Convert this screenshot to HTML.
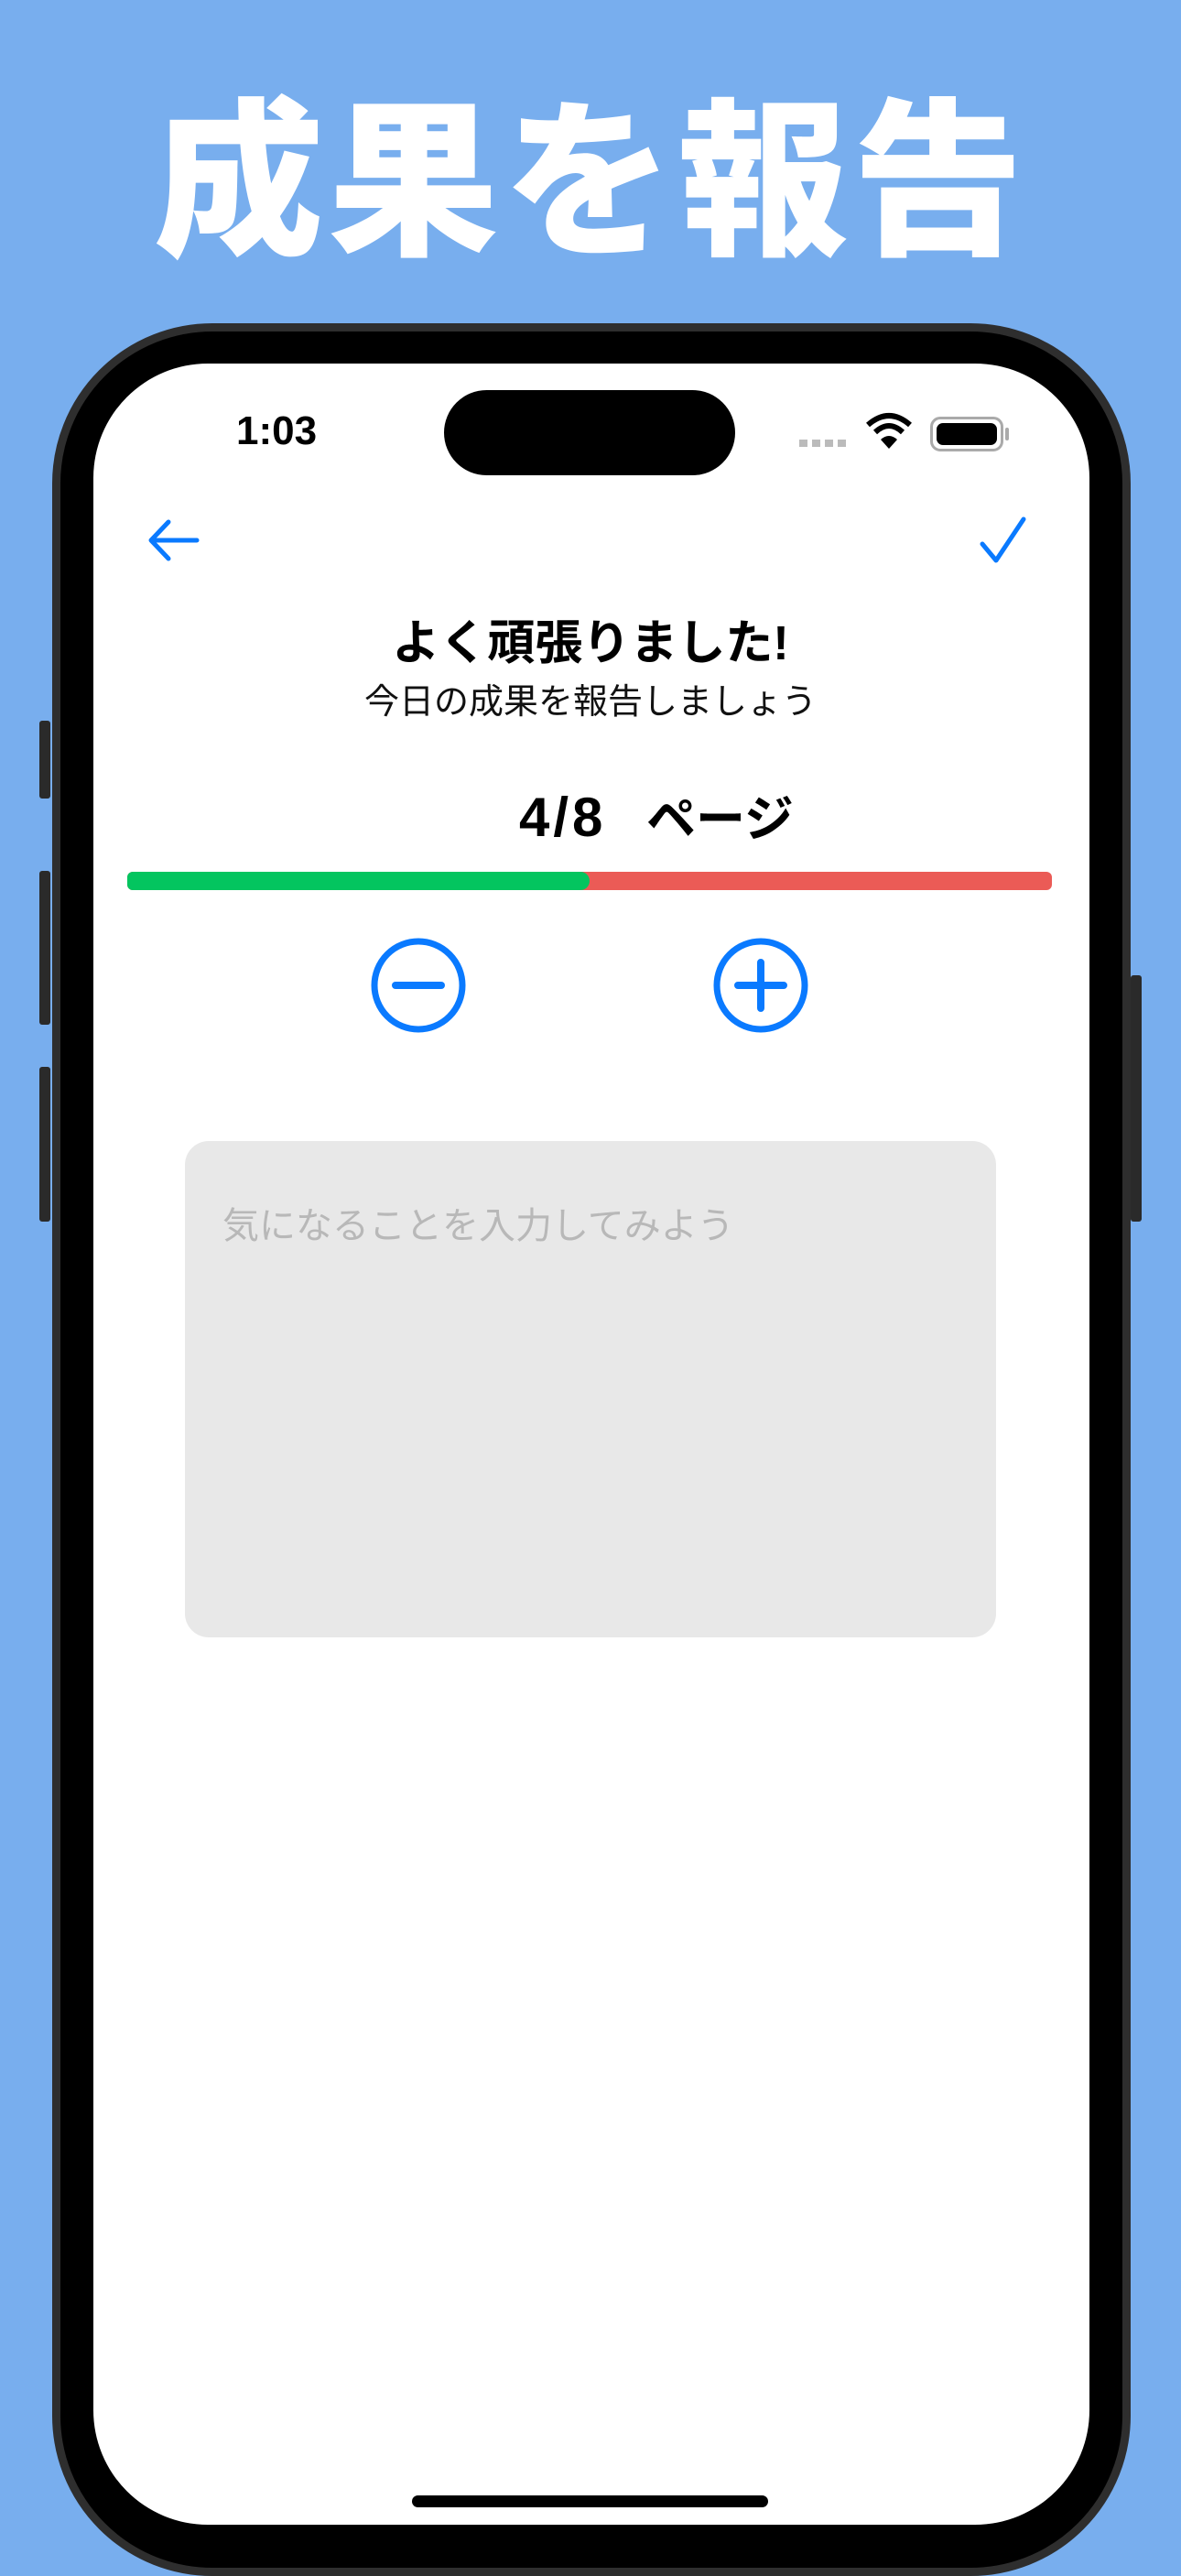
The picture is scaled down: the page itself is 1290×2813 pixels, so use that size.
<!DOCTYPE html>
<html><head><meta charset="utf-8"><style>
*{margin:0;padding:0;box-sizing:border-box}
body{width:1290px;height:2796px;background:#78aeee;position:relative;overflow:hidden;font-family:"Liberation Sans","Noto Sans CJK JP",sans-serif}
.abs{position:absolute}
h1{position:absolute;left:0;width:1290px;text-align:center;top:86px;font-size:186px;line-height:194px;color:#fff;font-weight:900;letter-spacing:5px;font-family:"Noto Sans CJK JP",sans-serif}
.frame{left:57px;top:353px;width:1178px;height:2460px;background:#000;border:9px solid #2e2e2e;border-radius:175px}
.screen{left:102px;top:397px;width:1088px;height:2360px;background:#fff;border-radius:125px;overflow:hidden}
.btn{background:#2a2a2a;border-radius:3px}
</style></head><body>
<h1>成果を報告</h1>
<div class="abs btn" style="left:43px;top:787px;width:12px;height:85px"></div>
<div class="abs btn" style="left:43px;top:951px;width:12px;height:168px"></div>
<div class="abs btn" style="left:43px;top:1165px;width:12px;height:169px"></div>
<div class="abs btn" style="left:1235px;top:1065px;width:12px;height:269px"></div>
<div class="abs frame"></div>
<div class="abs screen"></div>
<div class="abs" style="left:485px;top:426px;width:318px;height:93px;background:#000;border-radius:47px"></div>
<div class="abs" style="left:258px;top:446px;font-size:44px;font-weight:bold;color:#000">1:03</div>
<div class="abs" style="left:873px;top:480px;width:56px;height:8px;background:repeating-linear-gradient(90deg,#bbb 0 9px,transparent 9px 14px)"></div>
<svg class="abs" style="left:944px;top:450px" width="54" height="42" viewBox="0 0 54 42"><path d="M4 14 Q27 -6 50 14" stroke="#000" stroke-width="6" fill="none"/><path d="M12 22 Q27 8 42 22" stroke="#000" stroke-width="6" fill="none"/><path d="M27 40 L18 30 Q27 22 36 30 Z" fill="#000"/></svg>
<div class="abs" style="left:1016px;top:455px;width:80px;height:38px;border:3px solid #aaa;border-radius:11px;padding:4px"><div style="width:100%;height:100%;background:#000;border-radius:7px"></div></div>
<div class="abs" style="left:1098px;top:467px;width:4px;height:14px;background:#aaa;border-radius:2px"></div>
<svg class="abs" style="left:160px;top:565px" width="60" height="50" viewBox="0 0 60 50"><path d="M55 25 H6 M24 5 L5 25 L24 45" stroke="#0a7aff" stroke-width="5" fill="none" stroke-linecap="round" stroke-linejoin="round"/></svg>
<svg class="abs" style="left:1068px;top:562px" width="56" height="56" viewBox="0 0 56 56"><path d="M5 32 L20 50 L50 5" stroke="#0a7aff" stroke-width="5" fill="none" stroke-linecap="round" stroke-linejoin="round"/></svg>
<div class="abs" style="left:0;width:1290px;top:660px;text-align:center;font-size:52px;font-weight:bold;color:#000">よく頑張りました!</div>
<div class="abs" style="left:0;width:1290px;top:735px;text-align:center;font-size:38px;color:#111">今日の成果を報告しましょう</div>
<div class="abs" style="left:567px;top:850px;height:80px;display:flex;align-items:baseline;font-weight:bold;color:#000">
<span style="font-size:60px;letter-spacing:4px;width:139px;display:inline-block">4/8</span><span style="font-size:54px">ページ</span></div>
<div class="abs" style="left:139px;top:952px;width:1010px;height:20px;background:#eb5b56;border-radius:6px;overflow:hidden"><div style="width:505px;height:100%;background:#03c55f;border-radius:0 10px 10px 0"></div></div>
<svg class="abs" style="left:402px;top:1021px" width="110" height="110" viewBox="0 0 110 110"><circle cx="55" cy="55" r="48" stroke="#0a7aff" stroke-width="7" fill="none"/><path d="M30 55 H80" stroke="#0a7aff" stroke-width="8" stroke-linecap="round"/></svg>
<svg class="abs" style="left:776px;top:1021px" width="110" height="110" viewBox="0 0 110 110"><circle cx="55" cy="55" r="48" stroke="#0a7aff" stroke-width="7" fill="none"/><path d="M30 55 H80 M55 30 V80" stroke="#0a7aff" stroke-width="8" stroke-linecap="round"/></svg>
<div class="abs" style="left:202px;top:1246px;width:886px;height:542px;background:#e8e8e8;border-radius:26px"></div>
<div class="abs" style="left:243px;top:1306px;font-size:40px;color:#b8b8b8">気になることを入力してみよう</div>
<div class="abs" style="left:450px;top:2725px;width:389px;height:13px;background:#000;border-radius:7px"></div>
</body></html>
